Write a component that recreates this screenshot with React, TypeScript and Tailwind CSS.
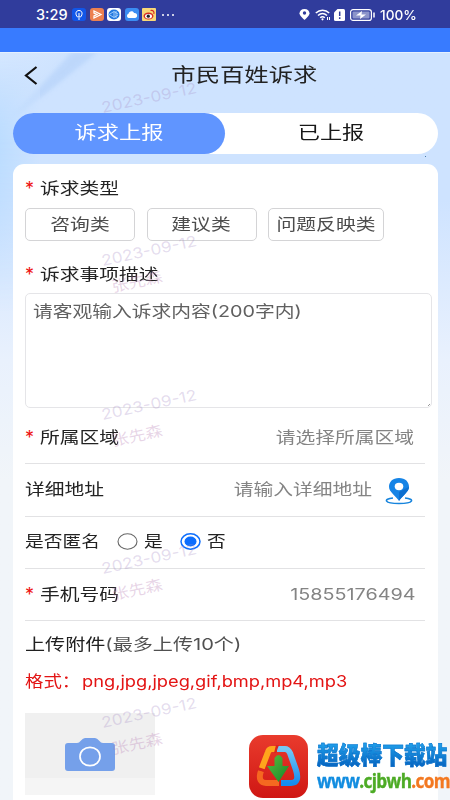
import React from 'react';

const WATERMARKS = [97, 250, 404, 558, 712];
const CATEGORIES = [
  { label: '咨询类', width: 'w-[110px]' },
  { label: '建议类', width: 'w-[110px]' },
  { label: '问题反映类', width: 'w-[116px]' },
];

function Wide({ children, className = '', scale = 'scale-x-[1.235]' }: { children: React.ReactNode; className?: string; scale?: string }) {
  return <span className={`inline-block whitespace-nowrap ${scale} ${className}`}>{children}</span>;
}

function Label({ children, required = false }: { children: React.ReactNode; required?: boolean }) {
  return (
    <div className="flex items-center text-[#222]">
      {required && <span className="w-[14.5px] shrink-0 pt-[3px] text-[18px] leading-5 text-[#ee1111]">*</span>}
      <Wide className="origin-left">{children}</Wide>
    </div>
  );
}

function Row({ children }: { children: React.ReactNode }) {
  return <div className="flex h-[52.3px] items-center justify-between border-b border-[#e2e2e4] pb-[2px]">{children}</div>;
}

function StatusBar() {
  return (
    <div className="flex h-7 shrink-0 items-center bg-[#303c9c] pl-9 pt-px text-white">
      <span className="w-9 origin-left text-[14.5px] font-medium leading-7">3:29</span>
      <div className="flex gap-[3.5px]">
        <svg width="14" height="13" viewBox="0 0 14 13"><rect width="14" height="13" rx="3" fill="#1156e8" /><path d="M5.5 9C3 6.500 3.500 2.500 7 2.500S11 6.500 8.500 9M5.500 9h3M6 11h2M7 5v4" stroke="#fff" fill="none" /></svg>
        <svg width="14" height="13" viewBox="0 0 14 13"><rect width="14" height="13" rx="3" fill="#ec8050" /><path d="M4 3v2l3 1.500L4 8v2l7-3.500z" fill="none" stroke="#fff" strokeWidth="1.300" /></svg>
        <svg width="14" height="13" viewBox="0 0 14 13"><rect width="14" height="13" rx="3" fill="#fff" /><ellipse cx="7" cy="6.500" rx="5.500" ry="5" fill="#2378df" /><path d="M2 6.500l5-3v6zM9 3v7M7 3.500l4 2.500M7 9.500l4-2.500" stroke="#b9dcff" fill="none" strokeWidth=".8" /></svg>
        <svg width="14" height="13" viewBox="0 0 14 13"><rect width="14" height="13" rx="3" fill="#3b8df2" /><path d="M3.500 10a2.200 2.200 0 010-4.200C4 2.500 8.500 2.500 9 5c4-.5 4 5 1 5z" fill="#fff" /></svg>
        <svg width="14" height="13" viewBox="0 0 14 13"><rect width="14" height="13" rx="1" fill="#f8d877" /><ellipse cx="6.500" cy="8" rx="5" ry="3.500" fill="#d72e25" /><ellipse cx="6.500" cy="8.200" rx="3.500" ry="2.300" fill="#fff" /><circle cx="6.300" cy="8.200" r="1.600" fill="#222" /><path d="M8.500 2.500c3-.6 4 1.500 3.300 3.500" stroke="#d72e25" fill="none" strokeWidth="1.200" /></svg>
      </div>
      <div className="ml-[6px] flex gap-[3px]"><i className="size-[2px] rounded-full bg-white" /><i className="size-[2px] rounded-full bg-white" /><i className="size-[2px] rounded-full bg-white" /></div>
      <div className="ml-auto flex items-center pr-[34px]">
        <svg className="mr-[5px]" width="11" height="13" viewBox="0 0 11 13"><path d="M5.500 1C2.500 1 .5 3 .5 5.300.5 8 5.500 12 5.500 12s5-4 5-6.700C10.500 3 8.500 1 5.500 1z" fill="#fff" /><circle cx="5.500" cy="5" r="1.700" fill="#303c9c" /></svg>
        <svg className="mr-[3px]" width="16" height="12" viewBox="0 0 16 12"><path d="M.8 4c4-3.800 9.600-3.800 13.400 0M3 6.500c2.700-2.500 6.300-2.500 9 0M5.200 8.700c1.400-1.200 3.200-1.200 4.600 0" fill="none" stroke="#fff" strokeWidth="1.500" /><circle cx="7.500" cy="10.300" r="1.100" fill="#fff" /><path d="M12.500 8v3M14.500 8v3" stroke="#fff" /></svg>
        <svg className="mr-[5px]" width="11" height="12" viewBox="0 0 11 12"><path d="M3.500 0H9.500Q11 0 11 1.500V10.500Q11 12 9.500 12H1.500Q0 12 0 10.500V3.500z" fill="#fff" /><path d="M5.700 2.500v4.500M5.700 8.300v1.700" stroke="#303c9c" strokeWidth="1.500" /></svg>
        <svg className="mr-[5px]" width="25" height="12" viewBox="0 0 25 12"><rect x=".6" y=".6" width="20.800" height="10.800" rx="2.500" fill="none" stroke="#fff" strokeWidth="1.200" /><rect x="2.500" y="2.500" width="17" height="7" rx="1" fill="#8c94ca" /><path d="M12 2l-6 4.500h4.500L10 10l6-4.500h-4.500z" fill="#fff" /><path d="M24 3.500v5" stroke="#fff" strokeWidth="1.500" /></svg>
        <span className="w-[36px] origin-left scale-x-[1.05] text-[13px] font-medium leading-7">100%</span>
      </div>
    </div>
  );
}

function Radio({ checked = false }: { checked?: boolean }) {
  return (
    <svg width="21" height="17" viewBox="0 0 21 17">
      <ellipse cx="10.500" cy="8.500" rx="9.500" ry="7.700" fill="#fff" stroke={checked ? '#0d6efd' : '#666'} strokeWidth={checked ? 1.5 : 1.1} />
      {checked && <ellipse cx="10.500" cy="8.500" rx="6" ry="5" fill="#0d6efd" />}
    </svg>
  );
}

function LocationPin() {
  return (
    <svg className="mt-[5px]" width="28" height="28" viewBox="0 0 28 28">
      <path d="M8 21C-2 22 -1 26.500 14 26.500S30 22 20 21" fill="none" stroke="#1684dd" strokeWidth="1.600" />
      <path d="M14 1C7.500 1 4 5 4 9.800 4 15 10.500 18.500 14 24 17.500 18.500 24 15 24 9.800 24 5 20.500 1 14 1z" fill="#1684e6" />
      <path d="M14 15v9C17.500 18.500 24 15 24 9.800z" fill="#0d70d0" />
      <ellipse cx="14" cy="9.500" rx="4.300" ry="3.700" fill="#fff" />
    </svg>
  );
}

function SiteBadge() {
  return (
    <div className="absolute left-[249px] top-[735px] flex h-[63px]">
      <svg className="shrink-0" width="60" height="63" viewBox="0 0 60 63">
        <defs>
          <linearGradient id="red" x1="0" y1="0" x2="0" y2="1"><stop stopColor="#e93b2d" /><stop offset="1" stopColor="#cf1713" /></linearGradient>
          <linearGradient id="green" x1="0" y1="0" x2="1" y2="1"><stop stopColor="#5cbc3d" /><stop offset="1" stopColor="#16872a" /></linearGradient>
          <linearGradient id="blue" x1="0" y1="0" x2="0" y2="1"><stop stopColor="#74c8f5" /><stop offset="1" stopColor="#168df0" /></linearGradient>
        </defs>
        <rect width="59" height="63" rx="14" fill="url(#red)" />
        <g fill="none" strokeWidth="6" strokeLinejoin="round">
          <path d="M27 14H23Q20 14 19 17L12.500 34" stroke="#ffa51c" />
          <path d="M12 36C9 44 12 48 17 48H30" stroke="#f56820" />
          <path d="M28 14H36Q39 14 41 18L47 35Q51 48 42 48H32" stroke="url(#blue)" />
        </g>
        <path d="M9 32l9 3-1 2-9-2zM27 10l-2 8h2l3-8z" fill="#d92620" />
        <path d="M25.500 23Q29.500 17 33.500 23V31H40L29.500 47 18 31H25.500z" fill="url(#green)" />
      </svg>
      <div className="ml-[8px] w-[133px] pt-[5px]">
        <div className="w-max origin-left scale-x-[.905] whitespace-nowrap bg-linear-to-b from-[#25a8f0] to-[#0659b8] bg-clip-text text-[24px] font-black leading-[31px] text-transparent [-webkit-text-stroke:.5px_#0870cb]">超级棒下载站</div>
        <div className="-mt-[2px] w-max origin-left scale-x-[.88] whitespace-nowrap font-['Open_Sans'] text-[19.5px] font-bold leading-[24px] tracking-[-0.7px] [-webkit-text-stroke:.4px_currentColor]"><span className="text-[#128de0]">www</span><span className="text-[#4dab25]">.cjbwh</span><span className="text-[#f37820]">.com</span></div>
      </div>
    </div>
  );
}

export default function App() {
  return (
    <div className="relative flex h-[800px] w-[450px] flex-col overflow-hidden bg-linear-to-b from-[#cee3ff] from-25% via-[#e9f1fd] via-45% to-[#f1f5f9] to-60% font-[Inter,'Noto_Sans_CJK_SC',sans-serif] text-[16px] leading-5">
      <svg className="absolute left-0 top-[52px]" width="450" height="350" viewBox="0 0 450 350">
        <defs>
          <linearGradient id="ray" x1="0" y1="0" x2="1" y2="1"><stop stopColor="#d6e8ff" /><stop offset="1" stopColor="#c3dcfd" /></linearGradient>
          <linearGradient id="edge" x1="0" y1="0" x2="1" y2="0"><stop stopColor="#bbdcff" /><stop offset="1" stopColor="#cee3ff" /></linearGradient>
          <linearGradient id="fade" x1="0" y1="0" x2="0" y2="1"><stop stopColor="#fff" stopOpacity="0" /><stop offset=".35" stopColor="#fff" /><stop offset="1" stopColor="#fff" stopOpacity="0" /></linearGradient>
          <mask id="side"><rect width="60" height="260" fill="url(#fade)" /></mask>
          <filter id="soft"><feGaussianBlur stdDeviation="2" /></filter>
        </defs>
        <path d="M0 0H96L0 80z" fill="url(#ray)" />
        <path d="M72 0H98L35 50 12 65z" fill="#b3d0f9" opacity=".6" filter="url(#soft)" />
        <rect width="40" height="260" fill="url(#edge)" mask="url(#side)" />
      </svg>
      <StatusBar />
      <div className="relative h-6 shrink-0 bg-[#387bff]" />
      <header className="relative flex h-[61px] shrink-0 items-center justify-center border-t border-[#e4f0ff] pb-[17px] pl-[39px]">
        <svg className="absolute left-[24px] top-[13px]" width="15" height="19" viewBox="0 0 15 19"><path d="M12.500 1L2 9.500 12.500 18" stroke="#111" strokeWidth="2.200" fill="none" /></svg>
        <h1 className="origin-center scale-x-[1.23] whitespace-nowrap text-[19.8px] text-[#222]">市民百姓诉求</h1>
      </header>
      <nav className="relative mx-[12.5px] flex h-[41px] shrink-0 rounded-full bg-white text-[18px]">
        <div className="flex w-[212.5px] items-center justify-center rounded-full bg-[#6095ff] pb-px text-white"><Wide>诉求上报</Wide></div>
        <div className="flex flex-1 items-center justify-center pb-px text-[#181818]"><Wide>已上报</Wide></div>
      </nav>
      <main className="relative mx-[12.5px] mt-[10px] flex h-[650px] shrink-0 flex-col rounded-t-[11px] bg-white pl-[12.5px] pt-[12px]">
        <Label required>诉求类型</Label>
        <div className="mt-[9px] flex gap-[11.5px]">
          {CATEGORIES.map(c => (
            <button key={c.label} className={`flex h-[33px] shrink-0 items-center justify-center rounded-[5px] border border-[#d4d4d6] pb-[2px] text-[#4c4c4c] ${c.width}`}><Wide>{c.label}</Wide></button>
          ))}
        </div>
        <div className="mt-[21px]"><Label required>诉求事项描述</Label></div>
        <div className="relative mt-[8px] h-[115px] w-[407px] rounded-[5px] border border-[#e5e5e8] px-[7px] py-[7px] text-[#606060]">
          <Wide className="origin-left">请客观输入诉求内容(200字内)</Wide>
          <svg className="absolute bottom-0 right-0" width="4" height="4" viewBox="0 0 4 4"><path d="M1 3l2-2" stroke="#999" /></svg>
        </div>
        <div className="mt-[4px] w-[399.5px]">
          <Row><Label required>所属区域</Label><Wide className="mr-[10px] origin-right text-[#848484]">请选择所属区域</Wide></Row>
          <Row>
            <Label>详细地址</Label>
            <div className="mr-[12px] flex items-center text-[#848484]"><Wide className="mr-[12px] origin-right">请输入详细地址</Wide><LocationPin /></div>
          </Row>
          <Row>
            <div className="flex items-center text-[#222]">
              <span className="w-[91.500px]"><Wide className="origin-left" scale="scale-x-[1.17]">是否匿名</Wide></span>
              <Radio /><span className="ml-[6px] mr-[9px] w-[27px]"><Wide className="origin-left" scale="scale-x-[1.17]">是</Wide></span>
              <Radio checked /><Wide className="ml-[6px] origin-left" scale="scale-x-[1.17]">否</Wide>
            </div>
          </Row>
          <Row><Label required>手机号码</Label><Wide className="mr-[9px] origin-right text-[#848484]">15855176494</Wide></Row>
        </div>
        <div className="mt-[13px] text-[#202020]"><Wide className="origin-left" scale="scale-x-[1.255]">上传附件<span className="text-[#505050]">(最多上传10个)</span></Wide></div>
        <div className="mt-[17px] flex text-[#e31414]"><span className="w-[57px]"><Wide className="origin-left" scale="scale-x-[1.15]">格式：</Wide></span><Wide className="origin-left" scale="scale-x-[1.14]">png,jpg,jpeg,gif,bmp,mp4,mp3</Wide></div>
        <div className="mt-[22px] flex h-[82px] w-[130px] flex-col bg-[#f5f5f5]">
          <div className="flex h-[65px] items-center justify-center bg-[#f0f0f0] pt-[17px]">
            <svg width="50" height="34" viewBox="0 0 50 34"><path d="M3 6H12Q14 6 16 3.500T20 1H30Q32 1 34 3.500T38 6H47Q50 6 50 9V31Q50 34 47 34H3Q0 34 0 31V9Q0 6 3 6z" fill="#75a0ea" /><ellipse cx="25" cy="19.500" rx="10" ry="9.200" fill="none" stroke="#fff" strokeWidth="1.700" /></svg>
          </div>
        </div>
      </main>
      <div className="pointer-events-none absolute inset-0">
        {WATERMARKS.map(y => (
          <div key={y} className="absolute left-[99px] w-[100px] text-center text-[15px] text-[#a58bc5]/30" style={{ top: y - 9 }}>
            <div className="-rotate-[12deg] scale-x-[1.14] whitespace-nowrap">2023-09-12</div>
            {y > 100 && <div className="mt-[11px] -ml-[24px] -rotate-[12deg] scale-x-[1.14] text-[#bb86b8]/35">张先森</div>}
          </div>
        ))}
      </div>
      <div className="absolute left-[425px] top-[156px] size-px bg-[#477ba8]" />
      <SiteBadge />
    </div>
  );
}
